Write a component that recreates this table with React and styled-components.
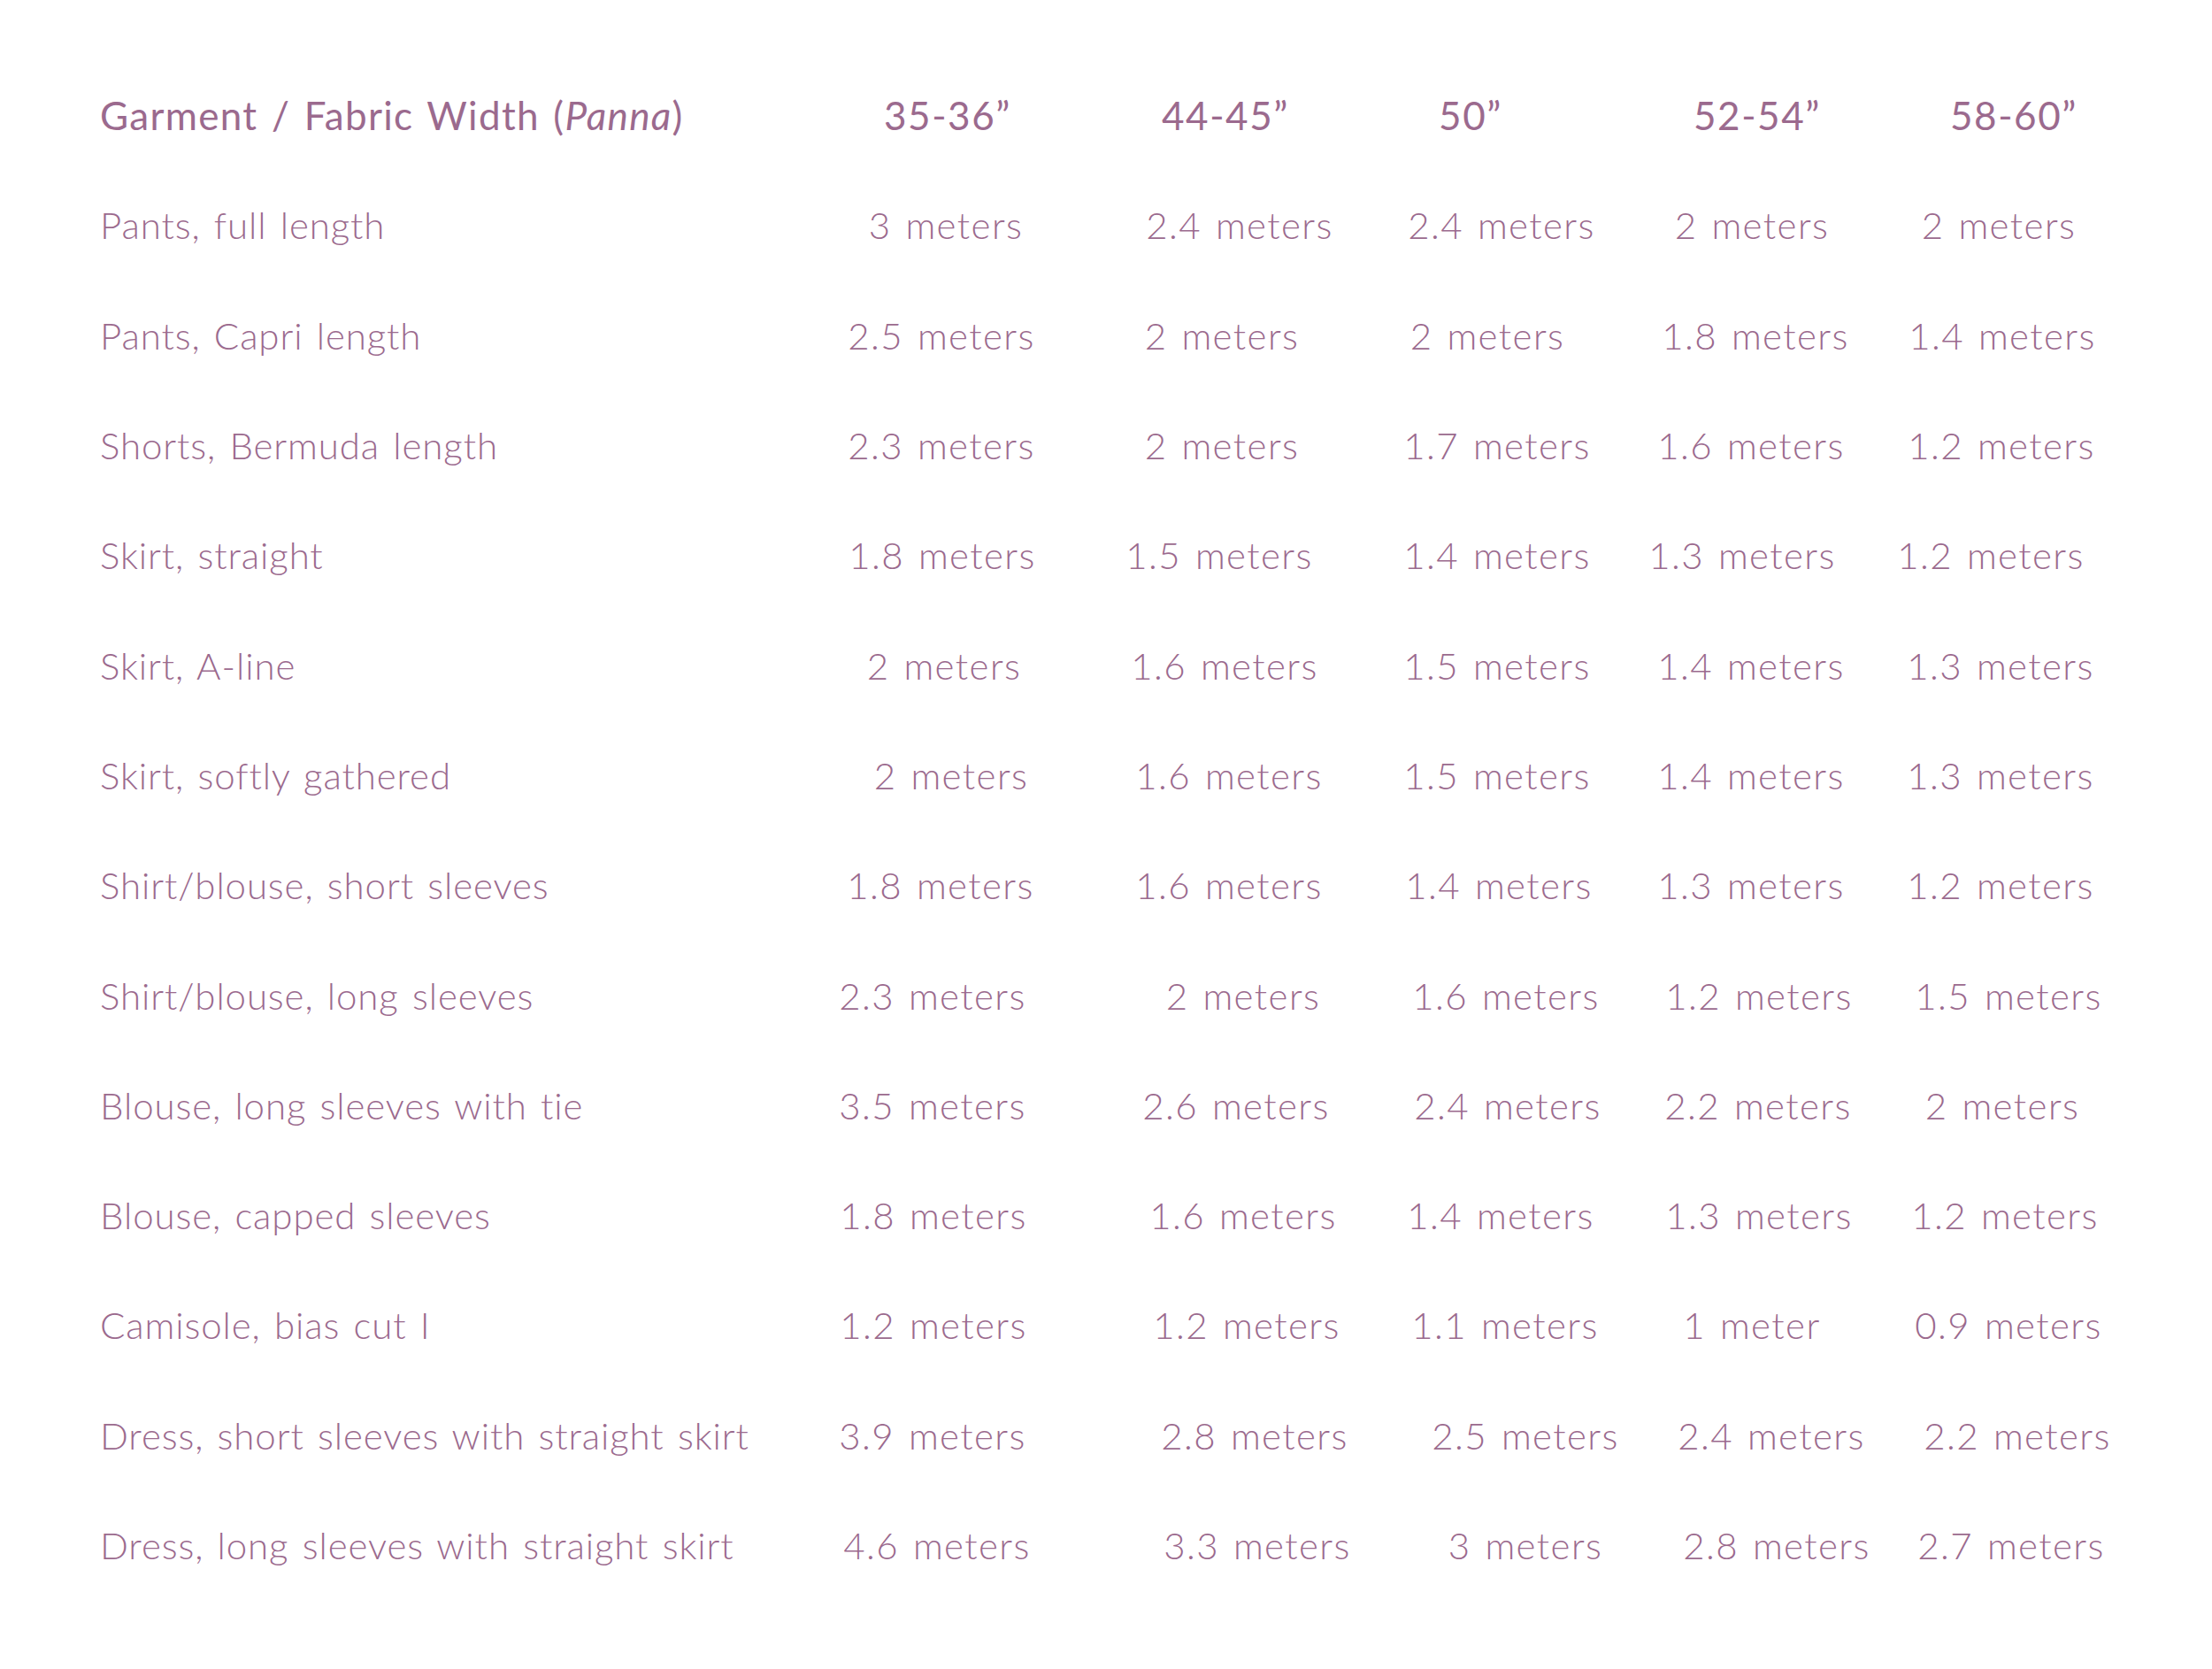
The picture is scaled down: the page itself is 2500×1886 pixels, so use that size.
import React from 'react';
import styled, { createGlobalStyle } from 'styled-components';

const GlobalStyle = createGlobalStyle`
  html, body {
    margin: 0;
    padding: 0;
    background: #ffffff;
  }
  body {
    font-family: Lato, "Open Sans", "Liberation Sans", sans-serif;
    color: #9b6a8e;
  }
`;

// the five width columns, in page px
const COLS = [
  { start: 915, width: 300 },
  { start: 1215, width: 350 },
  { start: 1565, width: 250 },
  { start: 1815, width: 340 },
  { start: 2155, width: 220 },
];

const headers = [
  ['35-36”', 1071],
  ['44-45”', 1385],
  ['50”', 1662],
  ['52-54”', 1986],
  ['58-60”', 2276],
];

// each row: label, then [value, measured center x]
const rows = [
  ['Pants, full length', [['3 meters', 1069], ['2.4 meters', 1401], ['2.4 meters', 1697], ['2 meters', 1980], ['2 meters', 2259]]],
  ['Pants, Capri length', [['2.5 meters', 1064], ['2 meters', 1381], ['2 meters', 1681], ['1.8 meters', 1984], ['1.4 meters', 2263]]],
  ['Shorts, Bermuda length', [['2.3 meters', 1064], ['2 meters', 1381], ['1.7 meters', 1692], ['1.6 meters', 1979], ['1.2 meters', 2262]]],
  ['Skirt, straight', [['1.8 meters', 1065], ['1.5 meters', 1378], ['1.4 meters', 1692], ['1.3 meters', 1969], ['1.2 meters', 2250]]],
  ['Skirt, A-line', [['2 meters', 1067], ['1.6 meters', 1384], ['1.5 meters', 1692], ['1.4 meters', 1979], ['1.3 meters', 2261]]],
  ['Skirt, softly gathered', [['2 meters', 1075], ['1.6 meters', 1389], ['1.5 meters', 1692], ['1.4 meters', 1979], ['1.3 meters', 2261]]],
  ['Shirt/blouse, short sleeves', [['1.8 meters', 1063], ['1.6 meters', 1389], ['1.4 meters', 1694], ['1.3 meters', 1979], ['1.2 meters', 2261]]],
  ['Shirt/blouse, long sleeves', [['2.3 meters', 1054], ['2 meters', 1405], ['1.6 meters', 1702], ['1.2 meters', 1988], ['1.5 meters', 2270]]],
  ['Blouse, long sleeves with tie', [['3.5 meters', 1054], ['2.6 meters', 1397], ['2.4 meters', 1704], ['2.2 meters', 1987], ['2 meters', 2263]]],
  ['Blouse, capped sleeves', [['1.8 meters', 1055], ['1.6 meters', 1405], ['1.4 meters', 1696], ['1.3 meters', 1988], ['1.2 meters', 2266]]],
  ['Camisole, bias cut I', [['1.2 meters', 1055], ['1.2 meters', 1409], ['1.1 meters', 1701], ['1 meter', 1980], ['0.9 meters', 2270]]],
  ['Dress, short sleeves with straight skirt', [['3.9 meters', 1054], ['2.8 meters', 1418], ['2.5 meters', 1724], ['2.4 meters', 2002], ['2.2 meters', 2280]]],
  ['Dress, long sleeves with straight skirt', [['4.6 meters', 1059], ['3.3 meters', 1421], ['3 meters', 1724], ['2.8 meters', 2008], ['2.7 meters', 2273]]],
];

const shift = (i, x) => Math.round(x - (COLS[i].start + COLS[i].width / 2));

const Page = styled.div`
  width: 2500px;
  min-height: 1886px;
  padding: 68px 0 0 113px;
  box-sizing: border-box;
`;

const Table = styled.div`
  display: grid;
  grid-template-columns: 802px ${COLS.map(c => `${c.width}px`).join(' ')};
  grid-auto-rows: 124.3px;
  align-items: center;
`;

const HeadLabel = styled.div`
  font-size: 44px;
  font-weight: 400;
  letter-spacing: 1.3px;
  word-spacing: 3px;
  white-space: nowrap;

  em {
    font-style: italic;
  }
`;

const HeadCell = styled.div`
  font-size: 44px;
  font-weight: 400;
  letter-spacing: 1.6px;
  text-align: center;
  white-space: nowrap;
  transform: translateX(${p => p.$dx}px);
`;

const Label = styled.div`
  font-size: 42px;
  font-weight: 300;
  letter-spacing: 0.9px;
  word-spacing: 3px;
  white-space: nowrap;
`;

const Value = styled.div`
  font-size: 42px;
  font-weight: 300;
  letter-spacing: 1.4px;
  word-spacing: 3px;
  text-align: center;
  white-space: nowrap;
  transform: translateX(${p => p.$dx}px);
`;

export default function App() {
  return (
    <Page>
      <GlobalStyle />
      <Table>
        <HeadLabel>
          Garment / Fabric Width (<em>Panna</em>)
        </HeadLabel>
        {headers.map(([text, x], i) => (
          <HeadCell key={text} $dx={shift(i, x)}>{text}</HeadCell>
        ))}
        {rows.map(([label, cells]) => (
          <React.Fragment key={label}>
            <Label>{label}</Label>
            {cells.map(([text, x], i) => (
              <Value key={i} $dx={shift(i, x)}>{text}</Value>
            ))}
          </React.Fragment>
        ))}
      </Table>
    </Page>
  );
}
